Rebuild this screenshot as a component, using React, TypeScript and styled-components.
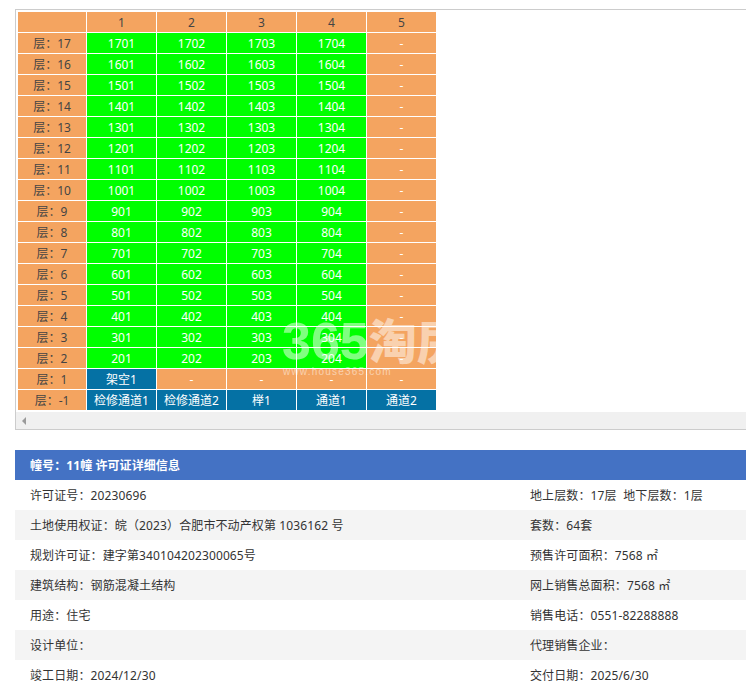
import * as React from 'react';
import styled, { createGlobalStyle } from 'styled-components';

const GlobalStyle = createGlobalStyle`
  html, body {
    margin: 0;
    padding: 0;
    background: #fff;
    overflow: hidden;
  }
  body {
    font-family: "Noto Sans", "Noto Sans CJK SC", sans-serif;
    font-size: 12px;
    color: #333;
  }
`;

const Page = styled.div`
  width: 900px;
  padding: 9px 0 0 15px;
`;

const Frame = styled.div`
  position: relative;
  border: 1px solid #ccc;
  padding: 1px 0 0 1px;
`;

const Grid = styled.table`
  border-collapse: separate;
  border-spacing: 1px;
  table-layout: fixed;
  width: 420px;
`;

const FloorCell = styled.td`
  height: 20px;
  width: 69px;
  padding: 1px 0 0;
  box-sizing: border-box;
  background: #f4a460;
  color: #444;
  text-align: center;
  line-height: 18px;

  &:first-child {
    width: 68px;
  }
`;

const Cell = styled.td<{ $kind: 'sold' | 'empty' | 'other' }>`
  height: 20px;
  width: 69px;
  padding: 1px 0 0;
  box-sizing: border-box;
  text-align: center;
  line-height: 18px;
  color: #fff;
  background: ${(p) => (p.$kind === 'sold' ? '#00ff00' : p.$kind === 'other' ? '#0571a4' : '#f4a460')};
`;

const Scrollbar = styled.div`
  display: flex;
  align-items: center;
  height: 17px;
  margin: 1px 0 0 -1px;
  padding-left: 6px;
  background: #f0f0f0;
`;

const ArrowLeft = styled.span`
  width: 0;
  height: 0;
  border-style: solid;
  border-width: 4px 4px 4px 0;
  border-color: transparent #9a9a9a transparent transparent;
`;

const Watermark = styled.div`
  position: absolute;
  left: 266px;
  top: 303px;
  width: 154px;
  overflow: hidden;
  color: rgba(255, 255, 255, 0.5);
  pointer-events: none;
`;

const MarkLogo = styled.div`
  font-family: "Liberation Sans", sans-serif;
  font-weight: 700;
  font-size: 52px;
  line-height: 50px;
  white-space: nowrap;
`;

const MarkLogoCn = styled.span`
  font-family: "Noto Sans CJK SC", sans-serif;
  font-weight: 900;
  font-size: 48px;
`;

const MarkUrl = styled.div`
  font-family: "Liberation Sans", sans-serif;
  font-size: 10px;
  line-height: 11px;
  letter-spacing: 1.2px;
  margin-left: 1px;
  white-space: nowrap;
`;

const Detail = styled.section`
  margin-top: 20px;
`;

const DetailTitle = styled.h3`
  margin: 0;
  height: 30px;
  padding: 1px 0 0 15px;
  box-sizing: border-box;
  background: #4472c4;
  color: #fff;
  font-size: 12px;
  font-weight: 700;
  line-height: 30px;
  letter-spacing: 0.08px;
`;

const DetailRow = styled.div<{ $striped: boolean }>`
  display: grid;
  grid-template-columns: 500px 1fr;
  height: 30px;
  line-height: 30px;
  letter-spacing: 0.12px;
  background: ${(p) => (p.$striped ? '#f4f4f4' : '#fff')};
`;

const DetailCell = styled.div`
  padding: 1px 0 0 15px;
  white-space: nowrap;
`;

const columns = ['1', '2', '3', '4', '5'];
const floors = [17, 16, 15, 14, 13, 12, 11, 10, 9, 8, 7, 6, 5, 4, 3, 2];

const details = [
  ['许可证号\uFF1A20230696', '地上层数\uFF1A17层 \u00a0地下层数\uFF1A1层'],
  ['土地使用权证\uFF1A皖\uFF082023\uFF09合肥市不动产权第 1036162 号', '套数\uFF1A64套'],
  ['规划许可证\uFF1A建字第340104202300065号', '预售许可面积\uFF1A7568 ㎡'],
  ['建筑结构\uFF1A钢筋混凝土结构', '网上销售总面积\uFF1A7568 ㎡'],
  ['用途\uFF1A住宅', '销售电话\uFF1A0551-82288888'],
  ['设计单位\uFF1A', '代理销售企业\uFF1A'],
  ['竣工日期\uFF1A2024/12/30', '交付日期\uFF1A2025/6/30'],
];

export default function App() {
  return (
    <Page>
      <GlobalStyle />
      <Frame>
        <Grid>
          <tbody>
            <tr>
              <FloorCell />
              {columns.map((c) => (
                <FloorCell key={c}>{c}</FloorCell>
              ))}
            </tr>
            {floors.map((f) => (
              <tr key={f}>
                <FloorCell>{`层\uFF1A${f}`}</FloorCell>
                {[1, 2, 3, 4].map((u) => (
                  <Cell key={u} $kind="sold">{f * 100 + u}</Cell>
                ))}
                <Cell $kind="empty">-</Cell>
              </tr>
            ))}
            <tr>
              <FloorCell>{'层\uFF1A1'}</FloorCell>
              <Cell $kind="other">架空1</Cell>
              {[2, 3, 4, 5].map((u) => (
                <Cell key={u} $kind="empty">-</Cell>
              ))}
            </tr>
            <tr>
              <FloorCell>{'层\uFF1A-1'}</FloorCell>
              {['检修通道1', '检修通道2', '榉1', '通道1', '通道2'].map((t) => (
                <Cell key={t} $kind="other">{t}</Cell>
              ))}
            </tr>
          </tbody>
        </Grid>
        <Scrollbar>
          <ArrowLeft />
        </Scrollbar>
        <Watermark>
          <MarkLogo>365<MarkLogoCn>淘房</MarkLogoCn></MarkLogo>
          <MarkUrl>www.house365.com</MarkUrl>
        </Watermark>
      </Frame>
      <Detail>
        <DetailTitle>{'幢号\uFF1A11幢 许可证详细信息'}</DetailTitle>
        {details.map(([left, right], i) => (
          <DetailRow key={left} $striped={i % 2 === 1}>
            <DetailCell>{left}</DetailCell>
            <DetailCell>{right}</DetailCell>
          </DetailRow>
        ))}
      </Detail>
    </Page>
  );
}
